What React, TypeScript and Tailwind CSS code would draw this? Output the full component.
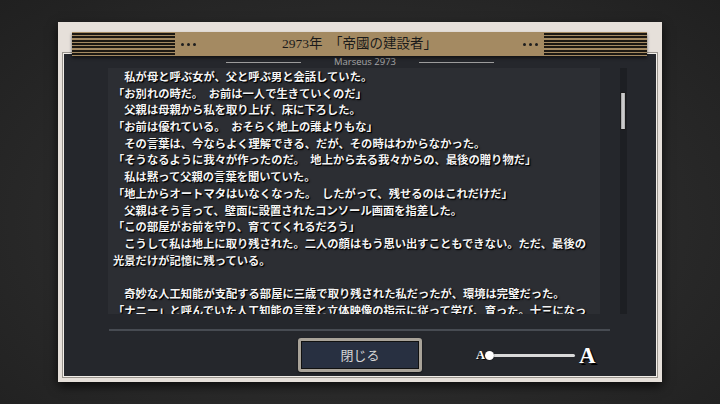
import React from "react";

const lines: string[] = [
  "　私が母と呼ぶ女が、父と呼ぶ男と会話していた。",
  "「お別れの時だ。　お前は一人で生きていくのだ」",
  "　父親は母親から私を取り上げ、床に下ろした。",
  "「お前は優れている。　おそらく地上の誰よりもな」",
  "　その言葉は、今ならよく理解できる、だが、その時はわからなかった。",
  "「そうなるように我々が作ったのだ。　地上から去る我々からの、最後の贈り物だ」",
  "　私は黙って父親の言葉を聞いていた。",
  "「地上からオートマタはいなくなった。　したがって、残せるのはこれだけだ」",
  "　父親はそう言って、壁面に設置されたコンソール画面を指差した。",
  "「この部屋がお前を守り、育ててくれるだろう」",
  "　こうして私は地上に取り残された。二人の顔はもう思い出すこともできない。ただ、最後の",
  "光景だけが記憶に残っている。",
  "",
  "　奇妙な人工知能が支配する部屋に三歳で取り残された私だったが、環境は完璧だった。",
  "「ナニー」と呼んでいた人工知能の言葉と立体映像の指示に従って学び、育った。十三になっ",
];

function Stripes() {
  return (
    <div className="flex h-full w-[103px] flex-col justify-between bg-[#a48a62] py-[1px]">
      {[0, 1, 2, 3, 4, 5, 6].map((i) => (
        <div key={i} className="h-[2px] w-full bg-[#1d1913]" />
      ))}
    </div>
  );
}

function Dots() {
  return (
    <div className="flex items-center gap-[3px]">
      <div className="h-[3px] w-[3px] rounded-full bg-[#1e1e1e]" />
      <div className="h-[3px] w-[3px] rounded-full bg-[#1e1e1e]" />
      <div className="h-[3px] w-[3px] rounded-full bg-[#1e1e1e]" />
    </div>
  );
}

export default function App() {
  return (
    <div className="flex h-[404px] w-[720px] items-center justify-center overflow-hidden bg-[radial-gradient(ellipse_at_50%_55%,#343434_0%,#2a2a2a_55%,#202020_100%)]">
      <div className="flex h-[360px] w-[604px] flex-col bg-[#e6e0da] px-[5px] pb-[5px] shadow-[0_4px_10px_rgba(0,0,0,0.7)]">
        {/* header bar */}
        <div className="relative z-10 ml-[9px] mr-[10px] mt-[10px] flex h-[24px] items-center bg-[#a48a62] shadow-[0_2px_3px_rgba(0,0,0,0.55)]">
          <Stripes />
          <div className="ml-[6px]">
            <Dots />
          </div>
          <div
            className="flex-1 text-center text-[13.5px] leading-none text-[#1a1a1a]"
            style={{ fontFamily: '"Liberation Serif", "Noto Sans CJK JP", serif' }}
          >
            2973年　「帝國の建設者」
          </div>
          <div className="mr-[6px]">
            <Dots />
          </div>
          <Stripes />
        </div>

        {/* panel */}
        <div className="-mt-[3px] flex flex-1 flex-col border border-[#f2eee9] bg-[#25272c] shadow-[0_0_0_1px_#9a958e]">
          {/* Marseus */}
          <div className="flex h-[14px] items-end justify-center">
            <div className="mb-[5px] h-px w-[75px] bg-[#9c9c9c]" />
            <div
              className="ml-[33px] mr-[23px] text-[9.5px] leading-[12px] text-[#a8a8a8]"
              style={{ fontFamily: '"Open Sans", "Liberation Sans", sans-serif' }}
            >
              Marseus 2973
            </div>
            <div className="mb-[5px] h-px w-[75px] bg-[#9c9c9c]" />
          </div>

          {/* text + scrollbar */}
          <div className="flex">
            <div
              className="ml-[44px] h-[246px] w-[492px] overflow-hidden bg-[#2c2e33] pl-[5px] text-[11.3px] font-bold leading-[16.7px] text-[#f4f4f4] [text-shadow:1px_1px_0_#000,1px_1px_2px_#000]"
              style={{ fontFamily: '"Noto Sans CJK JP", sans-serif' }}
            >
              {lines.map((l, i) => (
                <div key={i} className="h-[16.7px] whitespace-pre">
                  {l}
                </div>
              ))}
            </div>
            <div className="ml-[20px] h-[246px] w-[7px] bg-[#1d1f23] pt-[24px]">
              <div className="h-[38px] w-[6px] rounded-[1px] border border-[#1a1a1a] bg-[linear-gradient(90deg,#9a9a9a,#d8d8d8_50%,#a8a8a8)]" />
            </div>
          </div>

          {/* separator */}
          <div className="ml-[45px] mt-[15px] h-[2px] w-[501px] bg-[#474b52]" />

          {/* bottom controls */}
          <div className="mt-[7px] flex items-center">
            <div className="ml-[234px] flex h-[34px] w-[124px] items-center justify-center rounded-[3px] border-[3px] border-[#a9a399] bg-[#283041] shadow-[inset_0_0_0_1px_#111,0_1px_2px_rgba(0,0,0,0.6)]">
              <span
                className="text-[13px] text-[#d6d6d6]"
                style={{ fontFamily: '"Noto Sans CJK JP", sans-serif' }}
              >
                閉じる
              </span>
            </div>
            <div className="ml-[54px] flex items-center">
              <span
                className="text-[12.5px] font-bold leading-none text-white [text-shadow:1px_1px_0_#000]"
                style={{ fontFamily: '"Liberation Serif", serif' }}
              >
                A
              </span>
              <div className="relative ml-[0px] flex h-[10px] w-[90px] items-center">
                <div className="ml-[4px] h-[3px] w-[86px] rounded-full bg-[#d9d9d9]" />
                <div className="absolute left-[0px] top-[0.5px] h-[9px] w-[9px] rounded-full bg-white shadow-[0_0_1px_#000]" />
              </div>
              <span
                className="ml-[4px] text-[23px] font-bold leading-none text-white [text-shadow:2px_2px_0_#000]"
                style={{ fontFamily: '"Liberation Serif", serif' }}
              >
                A
              </span>
            </div>
          </div>
        </div>
      </div>
    </div>
  );
}
